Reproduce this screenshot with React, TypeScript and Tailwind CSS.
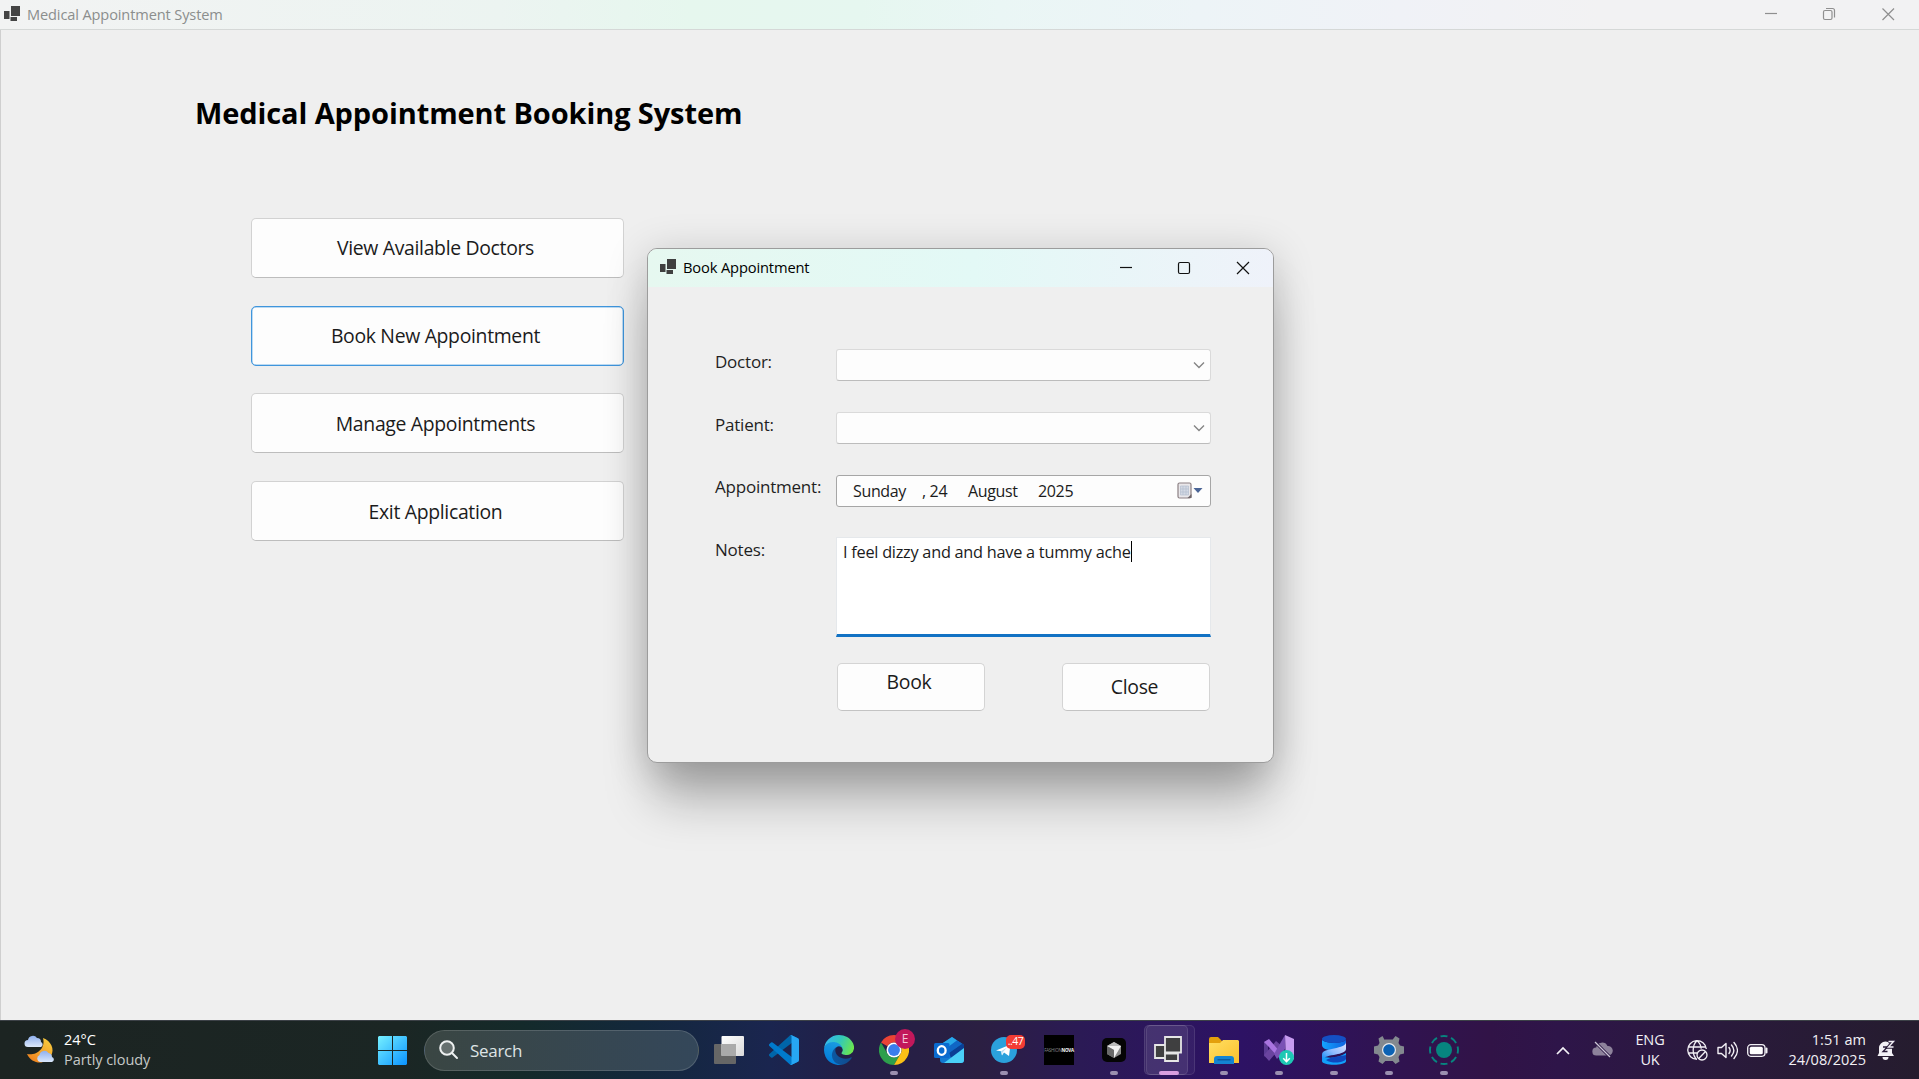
import type { ReactNode } from "react";

const shell = "font-['Open_Sans','Noto_Sans',sans-serif]";

function AppGlyph({ faded = false }: { faded?: boolean }) {
  const fill = faded ? "#444" : "#3f3f3f";
  return (
    <svg width="17" height="16" viewBox="0 0 17 16" className="mb-[2px] block shrink-0">
      <path d="M7 0h9v10H7z" fill={fill} />
      <path d="M0 5h5.500v8H0z" fill={fill} />
      <path d="M6.500 11h6.500v4H6.500z" fill={fill} />
    </svg>
  );
}

function MenuButton({ label, active = false }: { label: string; active?: boolean }) {
  return (
    <button
      className={`flex h-[60px] w-[373px] items-center justify-center rounded-[5px] border bg-[#fdfdfd] text-[19.4px] tracking-[-0.32px] text-[#1b1b1b] ${
        active ? "border-[#3f95dc] shadow-[inset_0_0_0_0.5px_#7cb8e8]" : "border-[#d2d2d2] border-b-[#bdbdbd]"
      }`}
    >
      <span className="whitespace-nowrap pr-[4px]">{label}</span>
    </button>
  );
}

function Combo() {
  return (
    <div className="flex h-[32px] w-[375px] items-center justify-end rounded-[3px] border border-[#dadada] border-b-[#bcbcbc] bg-[#fdfdfd] pr-[5px]">
      <svg width="12" height="8" viewBox="0 0 12 8" fill="none" stroke="#858585" strokeWidth="1.4">
        <path d="M1 1.5l5 5 5-5" />
      </svg>
    </div>
  );
}

function Row({ label, children }: { label: string; children: ReactNode }) {
  return (
    <div className="flex items-start">
      <span className="w-[121px] shrink-0 whitespace-nowrap text-[17px] leading-[26px] tracking-[-0.22px] text-[#1f1f1f]">{label}</span>
      {children}
    </div>
  );
}

function Dialog() {
  return (
    <section className="absolute left-[647px] top-[248px] flex h-[515px] w-[627px] flex-col overflow-hidden rounded-[10px] border border-[#9c9c9c] bg-[#efefef] shadow-[0_44px_50px_-8px_rgba(0,0,0,0.27),0_6px_42px_rgba(0,0,0,0.19)]">
      <header className="flex h-[38px] shrink-0 items-center bg-linear-to-r from-[#e6f8f0] via-[#e3f9f6] via-52% to-[#eff2fa] pl-[12px] text-[14.7px] text-black">
        <AppGlyph />
        <span className="mb-[2px] ml-[6px] whitespace-nowrap tracking-[-0.15px]">Book Appointment</span>
        <div className="ml-auto flex items-center">
          <svg width="175" height="38" viewBox="0 0 175 38" fill="none" stroke="#111" strokeWidth="1.2">
            <path d="M22 18.5h12" />
            <rect x="80.5" y="13.5" width="11" height="11" rx="1.5" />
            <path d="M139 13l12 12M151 13l-12 12" />
          </svg>
        </div>
      </header>
      <div className="flex flex-col pl-[67px] pt-[62px]">
        <div className="flex h-[63px]">
          <Row label="Doctor:"><Combo /></Row>
        </div>
        <div className="flex h-[62px]">
          <Row label="Patient:"><Combo /></Row>
        </div>
        <div className="flex h-[63px]">
          <Row label="Appointment:">
            <div className="mt-px flex h-[32px] w-[375px] items-center rounded-[3px] border-[1.5px] border-[#a6a6a6] bg-[#fdfdfd] text-[16px] tracking-[-0.35px] text-[#1b1b1b]">
              <span className="w-[69px] pl-[16px]">Sunday</span>
              <span className="ml-[16px] w-[46px] whitespace-pre">, 24</span>
              <span className="w-[70px]">August</span>
              <span>2025</span>
              <svg className="ml-auto mr-[7px]" width="26" height="19" viewBox="0 0 26 19">
                <rect x="1" y="1" width="13" height="15" rx="1.500" fill="#e9e7ea" stroke="#8c8084" strokeWidth="1.200" />
                <path d="M3.500 4h8v9h-8zM6 4v9M9 4v9M3.500 7h8M3.500 10h8" fill="#d3d9e4" stroke="#b4bed0" strokeWidth=".7" />
                <path d="M14.500 12l-4 4h4z" fill="#6e6569" />
                <path d="M16.500 6h9l-4.500 5z" fill="#4b6596" />
              </svg>
            </div>
          </Row>
        </div>
        <div className="flex h-[126px]">
          <Row label="Notes:">
            <div className="flex h-[100px] w-[375px] items-start border border-b-[3px] border-[#e5e8eb] border-b-[#1272c4] bg-white pl-[6px] pt-[3px] text-[16.3px] leading-[23px] text-[#1b1b1b]">
              <span className="whitespace-nowrap tracking-[-0.25px]">I feel dizzy and and have a tummy ache</span>
              <span className="h-[21px] w-px bg-black" />
            </div>
          </Row>
        </div>
        <div className="ml-[122px] flex w-[373px] justify-between text-[19.4px] tracking-[-0.3px] text-[#1b1b1b]">
          <button className="flex h-[48px] w-[148px] items-center justify-center rounded-[5px] border border-[#d4d4d4] border-b-[#c3c3c3] bg-[#fdfdfd] pb-[11px] pr-[4px]">Book</button>
          <button className="flex h-[48px] w-[148px] items-center justify-center rounded-[5px] border border-[#d4d4d4] border-b-[#c3c3c3] bg-[#fdfdfd] pr-[3px]">Close</button>
        </div>
      </div>
    </section>
  );
}

function Cell({ children, dot = false }: { children: ReactNode; dot?: boolean }) {
  return (
    <div className="relative flex h-[59px] w-[55px] shrink-0 items-center justify-center">
      {children}
      {dot && <span className="absolute bottom-[5px] left-[23.5px] h-[4px] w-[8px] rounded-full bg-[#9b8fb0]" />}
    </div>
  );
}

function WeatherIcon() {
  return (
    <svg width="32" height="30" viewBox="0 0 32 30">
      <defs>
        <linearGradient id="moon" x1="0" y1="1" x2=".7" y2="0"><stop stopColor="#ee7a1b" /><stop offset="1" stopColor="#f7c83d" /></linearGradient>
        <linearGradient id="cloud" x1="0" y1="0" x2="0" y2="1"><stop stopColor="#8fb0ee" /><stop offset="1" stopColor="#dbe8fb" /></linearGradient>
      </defs>
      <path d="M19 3c8 3 12 11 8 18-5 9-19 9-24-2 9 2 19-5 16-16z" fill="url(#moon)" />
      <path d="M4 12a3.500 3.500 0 010-7 5 5 0 019-2 4 4 0 014 4 2.700 2.700 0 010 5z" fill="url(#cloud)" />
      <path d="M16 27a3.700 3.700 0 01-.5-7 5 5 0 019-2 4 4 0 013.500 4 2.600 2.600 0 010 5z" fill="url(#cloud)" />
    </svg>
  );
}

function StartIcon() {
  return (
    <svg width="29" height="29" viewBox="0 0 29 29">
      <defs><linearGradient id="win" x1="0" y1="0" x2="1" y2="1"><stop stopColor="#76f0ff" /><stop offset="1" stopColor="#0a93ff" /></linearGradient></defs>
      <path d="M1 0h13v14H0V1zM15 0h13l1 1v13H15zM0 15h14v14H1l-1-1zM15 15h14v13l-1 1H15z" fill="url(#win)" />
    </svg>
  );
}

function TaskViewIcon() {
  return (
    <svg width="30" height="28" viewBox="0 0 30 28">
      <defs><linearGradient id="tv" x1="0" y1="0" x2="1" y2="1"><stop stopColor="#fff" /><stop offset="1" stopColor="#d9d9d9" /></linearGradient></defs>
      <rect y="8" width="22" height="20" rx="1" fill="#666" />
      <rect x="7.500" width="22.500" height="20" rx="1" fill="url(#tv)" />
      <path d="M7.500 8H22v12H7.500z" fill="#aaa" />
    </svg>
  );
}

function CodeIcon() {
  return (
    <svg width="30" height="30" viewBox="0 0 100 100">
      <path d="M96.500 10.800L75.900.9a6.200 6.200 0 00-7.100 1.200L1.300 63.600a4.200 4.200 0 000 6.200l5.500 5a4.200 4.200 0 005.300.2L93.400 13.400c2.700-2 6.600-.1 6.600 3.300v-.2c0-2.400-1.400-4.600-3.500-5.700z" fill="#0065a9" />
      <path d="M96.500 89.200l-20.600 9.900a6.200 6.200 0 01-7.100-1.200L1.300 36.400a4.200 4.200 0 010-6.200l5.500-5a4.200 4.200 0 015.300-.2l81.300 61.600c2.700 2 6.600.1 6.600-3.300v.2c0 2.400-1.400 4.600-3.500 5.700z" fill="#007acc" />
      <path d="M75.900 99.100a6.200 6.200 0 01-7.100-1.200c2.300 2.300 6.200.7 6.200-2.600V4.700c0-3.300-3.900-4.900-6.200-2.600A6.200 6.200 0 0175.900.9l20.600 9.900c2.100 1 3.500 3.200 3.500 5.600v67.200c0 2.400-1.400 4.600-3.500 5.600z" fill="#27a7f4" />
    </svg>
  );
}

function EdgeIcon() {
  return (
    <svg width="30" height="30" viewBox="0 0 256 256">
      <defs>
        <linearGradient id="e1" x1="0" x2="1"><stop stopColor="#0c59a4" /><stop offset="1" stopColor="#114a8b" /></linearGradient>
        <linearGradient id="e2" x1=".6" y1="0" x2=".3" y2="1"><stop stopColor="#1b9de2" /><stop offset="1" stopColor="#0078d7" /></linearGradient>
        <linearGradient id="e3" x1="0" y1=".3" x2="1" y2=".6"><stop stopColor="#35b8f1" /><stop offset=".5" stopColor="#33c9b8" /><stop offset="1" stopColor="#6de64b" /></linearGradient>
      </defs>
      <path d="M231 190.500c-3.400 1.800-6.900 3.400-10.500 4.700a101 101 0 01-35.900 6.400c-47.300 0-88.500-32.500-88.500-74.300a31.500 31.500 0 0116.400-27.300c-42.800 1.800-53.800 46.400-53.800 72.500 0 74 68.100 81.400 82.800 81.400 7.900 0 19.800-2.300 27-4.600l1.300-.4a128 128 0 0066.600-52.800 4 4 0 00-5.400-5.600z" fill="url(#e1)" />
      <path d="M105.700 241.400a79.200 79.200 0 01-22.700-21.300 80.700 80.700 0 0129.500-120c3.100-1.500 8.500-4.100 15.600-4a32.400 32.400 0 0125.700 13 32 32 0 016.300 18.700c0-.2 24.500-79.600-80-79.600-43.900 0-80 41.700-80 78.200a130 130 0 0012.100 56 128 128 0 00156.400 67 75.500 75.500 0 01-62.800-8z" fill="url(#e2)" />
      <path d="M152.300 148.900c-.9 1-3.400 2.500-3.400 5.600 0 2.600 1.700 5.200 4.800 7.300 14.400 10.100 41.700 8.700 41.800 8.700a60 60 0 0030.500-8.300A61.800 61.800 0 00256.500 109c.3-22.400-8-37.300-11.300-43.900C223.900 23.500 177.700 0 128.100 0a128 128 0 00-128 126.200c.5-36.500 36.800-66 80-66 3.500 0 23.500.3 42 10a72.600 72.600 0 0130.900 29.300c6.100 10.600 7.200 24.100 7.200 29.500s-2.700 13.300-7.900 19.900z" fill="url(#e3)" />
    </svg>
  );
}

function ChromeIcon() {
  return (
    <div className="relative">
      <svg width="30" height="30" viewBox="0 0 48 48" className="block">
        <path d="M24 0a24 24 0 0120.800 12H24a12 12 0 00-10.400 6L3.200 12A24 24 0 0124 0z" fill="#ea4335" />
        <path d="M3.200 12l10.400 18A12 12 0 0034.400 30L24 48A24 24 0 013.200 12z" fill="#2d9f4c" />
        <path d="M34.400 30L24 48a24 24 0 0020.800-36H24a12 12 0 0110.400 18z" fill="#fbc116" />
        <circle cx="24" cy="24" r="12" fill="#fff" /><circle cx="24" cy="24" r="9.500" fill="#3b7ded" />
      </svg>
      <span className="absolute -top-[6px] left-[16px] flex h-[20px] w-[20px] items-center justify-center rounded-full bg-[#c2185b] text-[12px] text-[#f3c6d8]">E</span>
    </div>
  );
}

function OutlookIcon() {
  return (
    <svg width="30" height="28" viewBox="0 0 30 28" className="block">
      <path d="M6 9L18 1l12 8v15a3 3 0 01-3 3H9a3 3 0 01-3-3z" fill="#1279d1" />
      <path d="M8 7.500L18 1l5 3.500L11 13H6V9z" fill="#28a8ea" />
      <path d="M12 13L23 4.500l5 3L15 17z" fill="#1066c5" />
      <path d="M15 17L28.500 7.500 30 9v4L17 22z" fill="#0a3f94" />
      <path d="M30 12v12a3 3 0 01-3 3H10z" fill="#4ad0f7" />
      <rect y="7" width="15.500" height="15" rx="1.500" fill="#0a6bcf" />
      <ellipse cx="7.700" cy="14.500" rx="3.900" ry="4.300" fill="none" stroke="#fff" strokeWidth="2.300" />
    </svg>
  );
}

function TelegramIcon() {
  return (
    <div className="relative">
      <svg width="26" height="26" viewBox="0 0 26 26" className="block">
        <circle cx="13" cy="13" r="13" fill="#2ba1dc" />
        <path d="M5 13.500L19.500 7.500 18 19l-5-3.500-2 3-1-4.200z" fill="#fff" /><path d="M10 14.300l6-3.800-4.500 5-.5 3z" fill="#b9dcf0" />
      </svg>
      <span className="absolute -top-[2px] left-[15px] flex h-[14px] w-[19px] items-center justify-center rounded-[5px] bg-[#f23c34] text-[10.5px] tracking-[-0.5px] text-white">..47</span>
    </div>
  );
}

function CursorIcon() {
  return (
    <svg width="24" height="24" viewBox="0 0 24 24">
      <rect width="24" height="24" rx="5" fill="#050505" />
      <path d="M12 4l7 4v8l-7 4-7-4V8z" fill="#8b8b8b" /><path d="M5 8l7-4 7 4-7 4z" fill="#bbb" /><path d="M5 8l14 0-7 12v-8z" fill="#f2f2f2" /><path d="M5 8l7 4v8l-7-4z" fill="#6a6a6a" />
    </svg>
  );
}

function FormsIcon() {
  return (
    <div className="relative flex h-[59px] w-[55px] shrink-0 items-center justify-center">
      <span className="absolute left-[4px] top-[4px] h-[50px] w-[49px] rounded-[5px] border border-white/10 bg-white/5" />
      <span className="absolute left-[2px] top-[4px] h-[50px] w-[44px] rounded-[5px] border border-white/10 bg-white/8" />
      <svg width="28" height="26" viewBox="0 0 28 26" fill="#3f3f40" stroke="#e6e6e6" strokeWidth="1.800" className="relative mr-[2px] mt-[-2px]">
        <path d="M1 9h11v13H1z" /><path d="M11 17.500h13V25H11z" /><path d="M11 1h16v15.500H11z" />
      </svg>
      <span className="absolute bottom-[5px] left-[17px] h-[4px] w-[20px] rounded-full bg-[#d99fe0]" />
    </div>
  );
}

function FolderIcon() {
  return (
    <svg width="30" height="27" viewBox="0 0 30 27">
      <defs><linearGradient id="fold" x1="0" y1="0" x2="1" y2="1"><stop stopColor="#ffdf62" /><stop offset="1" stopColor="#fbc02d" /></linearGradient></defs>
      <path d="M0 2a2 2 0 012-2h7l4 4h15v5H0z" fill="#e3a00c" /><path d="M0 6h11l3-3h15l1 1v22H0z" fill="url(#fold)" />
      <path d="M5 27v-5a3 3 0 013-3h14a3 3 0 013 3v5z" fill="#1484d2" /><path d="M8.500 22.800h13" stroke="#0b5394" strokeWidth="1.200" />
    </svg>
  );
}

function InstallerIcon() {
  return (
    <svg width="30" height="30" viewBox="0 0 30 30">
      <path d="M0 7l4-2v19l-4-3z" fill="#5b3b94" /><path d="M0 20L12 6l6 5L5 26z" fill="#6a449f" /><path d="M0 7l5-3 17 20v6z" fill="#a974e0" />
      <path d="M10 19L21 0v14l-8 10z" fill="#7a52b5" /><path d="M21 0l9 4v20l-8 6z" fill="#c79cf0" />
      <circle cx="22.500" cy="22.500" r="7.500" fill="#1ec8b4" /><path d="M22.500 18v8.500m-3.300-3.200l3.300 3.300 3.300-3.300" fill="none" stroke="#fff" strokeWidth="1.500" />
    </svg>
  );
}

function DatabaseIcon() {
  return (
    <svg width="24" height="30" viewBox="0 0 24 30">
      <defs>
        <linearGradient id="db" x1="0" y1="1" x2="1" y2="0"><stop stopColor="#0a8bf5" /><stop offset=".45" stopColor="#8fbcff" /><stop offset="1" stopColor="#e0e4ff" /></linearGradient>
        <linearGradient id="dbtop" x1="0" x2="1"><stop stopColor="#14a4ff" /><stop offset="1" stopColor="#0d62e0" /></linearGradient>
      </defs>
      <path d="M0 4c0 5 24 5 24 0v5c-2 4-8 5-13 6.500C5 15 0 13.500 0 10z" fill="url(#dbtop)" />
      <ellipse cx="12" cy="4" rx="12" ry="4" fill="#1450c4" />
      <path d="M0 21c6 3 17 2 24-3v8c0 5-24 5-24 0z" fill="#12a0fa" />
      <path d="M4 25c5-3 15-4 20-5v4c-2 4-14 5-20 1z" fill="#0f48bd" />
      <path d="M24 7v7c0 3-5 4.500-10 5.500-6 1-13 2-14 6V20c0-5 6-5 12-6.500 7-1.500 12-3 12-6.500z" fill="url(#db)" />
    </svg>
  );
}

function GearIcon() {
  return (
    <svg width="30" height="28" viewBox="0 0 30 28">
      <path d="M10.500 3.800L8.500 0 4.500 2.500 5.500 7 4 9.500 0 10.500v7l4 1 1.500 2.500-1 4.500 4 2.500 2.800-3h7.400l2.800 3 4-2.500-1-4.500 1.500-2.500 4-1v-7l-4-1L24.500 7l1-4.500L21.500 0l-2.800 3.500h-7.400z" fill="#83898f" />
      <circle cx="15" cy="14" r="7" fill="#e8ecf0" /><circle cx="15" cy="14" r="5.800" fill="#0b62b4" />
    </svg>
  );
}

function RingIcon() {
  return (
    <svg width="30" height="30" viewBox="0 0 30 30">
      <circle cx="15" cy="15" r="8" fill="#07857f" />
      <circle cx="15" cy="15" r="14" fill="none" stroke="#07857f" strokeWidth="1.900" pathLength="80" strokeDasharray="6.500 3.500" strokeDashoffset="3.250" />
    </svg>
  );
}

function Taskbar() {
  return (
    <footer className="flex h-[59px] w-full items-center border-t border-[#3c4147] bg-[linear-gradient(90deg,#1c2422_0px,#1b2624_400px,#142a2a_520px,#13283c_640px,#1a254f_770px,#231f48_850px,#2b1f42_980px,#2b1a55_1080px,#2d1264_1240px,#301350_1400px,#311347_1490px,#2e1549_1560px,#2a1a3c_1720px,#251c2e_1919px)]">
      <div className="flex w-[378px] items-center pl-[24px]">
        <WeatherIcon />
        <div className="ml-[8px] text-[14.500px] leading-[20px] tracking-[-0.05px]">
          <p className="text-white">24°C</p>
          <p className="text-[#c5c9c8]">Partly cloudy</p>
        </div>
      </div>
      <StartIcon />
      <div className="ml-[17px] flex h-[41px] w-[275px] items-center rounded-full border border-white/15 bg-linear-to-r from-[#3a4643] to-[#34475a] pl-[14px]">
        <svg width="20" height="20" viewBox="0 0 20 20" fill="none" stroke="#eef1f1" strokeWidth="2">
          <circle cx="8" cy="8" r="6.800" fill="#66706f" /><path d="M13 13l5 5" strokeLinecap="round" />
        </svg>
        <span className="ml-[11px] pt-px text-[17px] tracking-[-0.3px] text-[#dfe4e5]">Search</span>
      </div>
      <div className="ml-[2.5px] flex items-center">
        <Cell><TaskViewIcon /></Cell>
        <Cell><CodeIcon /></Cell>
        <Cell><EdgeIcon /></Cell>
        <Cell dot><ChromeIcon /></Cell>
        <Cell><OutlookIcon /></Cell>
        <Cell dot><TelegramIcon /></Cell>
        <Cell><span className="flex h-[30px] w-[30px] items-center justify-center bg-black text-[4.5px] tracking-[-0.25px] text-[#8a8a8a]">FASHION<b className="text-white">NOVA</b></span></Cell>
        <Cell dot><CursorIcon /></Cell>
        <FormsIcon />
        <Cell dot><FolderIcon /></Cell>
        <Cell dot><InstallerIcon /></Cell>
        <Cell dot><DatabaseIcon /></Cell>
        <Cell dot><GearIcon /></Cell>
        <Cell dot><RingIcon /></Cell>
      </div>
      <div className="ml-auto flex items-center pr-[23px] text-[14.500px] leading-[20px] text-[#f2f0f5]">
        <svg width="14" height="9" viewBox="0 0 14 9" fill="none" stroke="#f4f2f7" strokeWidth="1.700"><path d="M1 8l6-6 6 6" /></svg>
        <svg className="ml-[22px]" width="21" height="18" viewBox="0 0 21 18">
          <path d="M4.500 14.500a4 4 0 01-.3-8A6 6 0 0115.500 5a4.500 4.500 0 011 9.500z" fill="#8d829b" />
          <path d="M3 1l15 15" stroke="#2c1746" strokeWidth="3" /><path d="M3 1l15 15" stroke="#cdc6d6" strokeWidth="1.200" />
        </svg>
        <div className="ml-[21px] w-[32px] text-center tracking-[-0.1px]">ENG<br />UK</div>
        <svg className="ml-[21px]" width="21" height="21" viewBox="0 0 21 21" fill="none" stroke="#f2f0f5" strokeWidth="1.300">
          <path d="M19.300 9A9.300 9.300 0 1010 19.300M10 .8C5 5 5 15 9.500 19.300M10 .8c2.500 2 4 5 4.200 8M1.500 7h17.200M1.500 13H10" />
          <circle cx="15" cy="15" r="5" /><path d="M11.700 18.500l6.800-7" />
        </svg>
        <svg className="ml-[9px]" width="21" height="19" viewBox="0 0 21 19" fill="none" stroke="#f2f0f5" strokeWidth="1.400" strokeLinejoin="round" strokeLinecap="round">
          <path d="M1 6.500h3.500L9 2.500v14l-4.500-4H1zM12 6.500c1.500 2 1.500 4 0 6M14.500 4c3 3.500 3 7.500 0 11M17 1.500c4.500 5 4.500 11 0 16" />
        </svg>
        <svg className="ml-[9px]" width="21" height="13" viewBox="0 0 21 13" fill="none" stroke="#f2f0f5" strokeWidth="1.300">
          <rect x=".7" y=".7" width="17.300" height="11.600" rx="3.200" /><rect x="2.800" y="2.800" width="13" height="7.400" rx="1.500" fill="#fff" stroke="none" /><path d="M19.500 4.500v4" strokeWidth="2" strokeLinecap="round" />
        </svg>
        <div className="ml-[20px] w-[78px] whitespace-nowrap text-right tracking-[0.05px]">1:51 am<br />24/08/2025</div>
        <svg className="ml-[11px]" width="19" height="20" viewBox="0 0 19 20">
          <path d="M2 13V8a6.500 6.500 0 0113 0v5l2 3H.500z" fill="#f2f0f5" /><path d="M5.500 17h6a3 3 0 01-6 0z" fill="#f2f0f5" />
          <path d="M6 7h4.500L6 11.500h4.500" fill="none" stroke="#281b38" strokeWidth="1.300" />
          <path d="M11.500 1.500h5l-5 5.500h5" fill="none" stroke="#281b38" strokeWidth="3.400" /><path d="M11.500 1.500h5l-5 5.500h5" fill="none" stroke="#f2f0f5" strokeWidth="1.400" />
        </svg>
      </div>
    </footer>
  );
}

export default function App() {
  return (
    <main className={`relative flex h-[1079px] w-[1919px] flex-col overflow-hidden bg-[#efefef] ${shell}`}>
      <header className="flex h-[30px] shrink-0 items-center border-b border-[#d5d8d7] bg-[linear-gradient(90deg,#f2f3f3_0px,#ecf4f1_500px,#e6f7ee_690px,#e6f7f0_860px,#eaf6f5_1000px,#edf4f7_1200px,#f0f2f7_1400px,#f2f2f3_1600px)] pl-[4px] text-[14.600px] text-[#8b8e8d]">
        <AppGlyph faded />
        <span className="ml-[6px] whitespace-nowrap tracking-[-0.13px]">Medical Appointment System</span>
        <svg className="ml-auto" width="159" height="29" viewBox="0 0 159 29" fill="none" stroke="#8f8f8f" strokeWidth="1.200">
          <path d="M5 13.500h12" />
          <rect x="63.500" y="10.500" width="8.500" height="9" rx="1.500" /><path d="M66 8.500h6.500a2 2 0 012 2v7" />
          <path d="M122.500 8.500l11.500 11.500M134 8.500L122.500 20" />
        </svg>
      </header>
      <div className="flex min-h-0 flex-1 flex-col border-l border-[#cfcfcf] pl-[194px] pt-[62px]">
        <h1 className="whitespace-nowrap text-[29px] font-bold leading-[42px] tracking-[-0.1px] text-black">Medical Appointment Booking System</h1>
        <nav className="ml-[56px] mt-[84px] flex flex-col gap-[27.700px]">
          <MenuButton label="View Available Doctors" />
          <MenuButton label="Book New Appointment" active />
          <MenuButton label="Manage Appointments" />
          <MenuButton label="Exit Application" />
        </nav>
      </div>
      <Dialog />
      <Taskbar />
    </main>
  );
}
